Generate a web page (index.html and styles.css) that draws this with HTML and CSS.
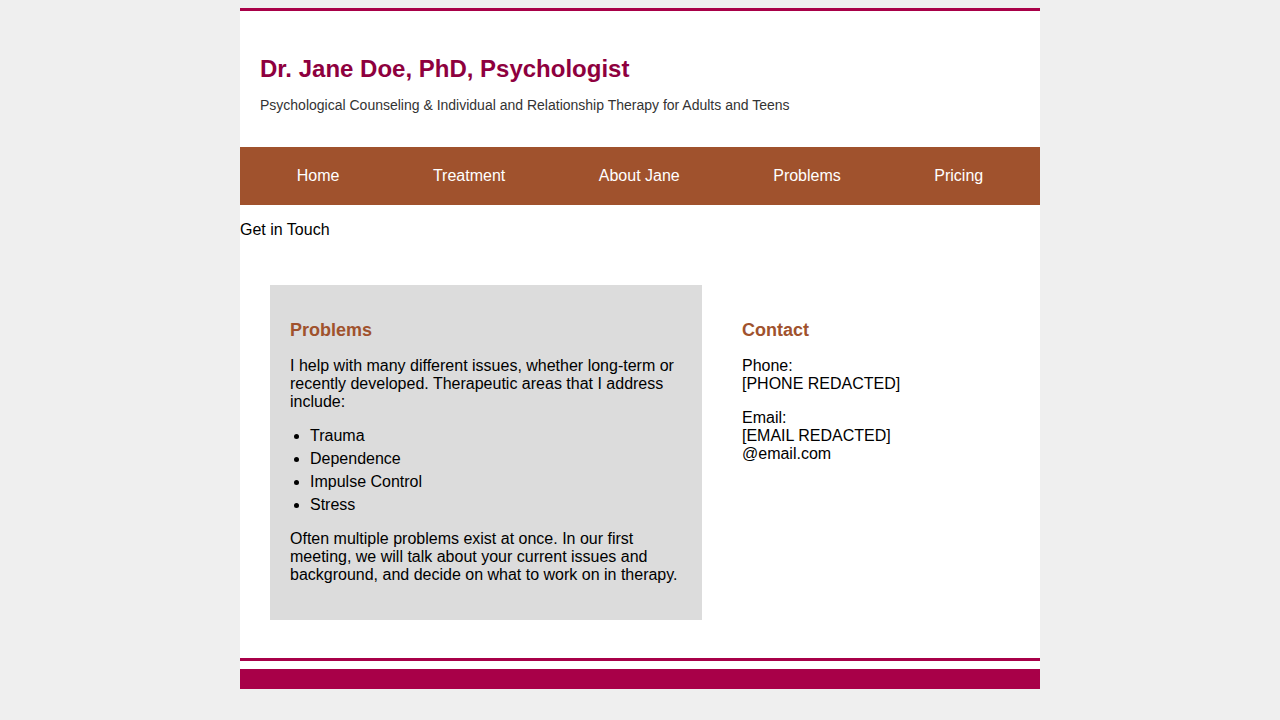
FILE: index.html
```html
<!DOCTYPE html>
<html lang="en">
<head>
<meta charset="utf-8">
<title>Dr. Jane Doe, PhD, Psychologist</title>
<link rel="stylesheet" href="styles.css">
</head>
<body>
<div class="page">
  <header class="header">
    <h1 class="site-title">Dr. Jane Doe, PhD, Psychologist</h1>
    <p class="tagline">Psychological Counseling &amp; Individual and Relationship Therapy for Adults and Teens</p>
  </header>
  <nav class="nav">
    <a class="nav-link" href="#">Home</a>
    <a class="nav-link" href="#">Treatment</a>
    <a class="nav-link" href="#">About Jane</a>
    <a class="nav-link" href="#">Problems</a>
    <a class="nav-link" href="#">Pricing</a>
  </nav>
  <div class="extra-link">Get in Touch</div>
  <main class="main">
    <section class="card card-problems">
      <h3 class="card-title">Problems</h3>
      <p class="text">I help with many different issues, whether long-term or recently developed. Therapeutic areas that I address include:</p>
      <ul class="list">
        <li>Trauma</li>
        <li>Dependence</li>
        <li>Impulse Control</li>
        <li>Stress</li>
      </ul>
      <p class="text">Often multiple problems exist at once. In our first meeting, we will talk about your current issues and background, and decide on what to work on in therapy.</p>
    </section>
    <section class="card card-contact">
      <h3 class="card-title">Contact</h3>
      <p class="text contact-p">Phone:<br>[PHONE REDACTED]</p>
      <p class="text">Email:<br>[EMAIL REDACTED]<br>@email.com</p>
    </section>
  </main>
  <footer class="footer">
    <div class="footer-bar"></div>
  </footer>
</div>
</body>
</html>
```

FILE: styles.css
```css
html, body {
  margin: 0;
  padding: 0;
}
body {
  background: #efefef;
  padding: 8px 0;
  font-family: "Liberation Sans", Arial, Helvetica, sans-serif;
  color: #000;
}
.page {
  width: 800px;
  margin: 0 auto;
  background: #fff;
  border-top: 3px solid #a80048;
}
.header {
  padding: 44px 20px 34px;
}
.site-title {
  margin: 0 0 14px;
  font-size: 24px;
  line-height: 28px;
  font-weight: bold;
  color: #8e003e;
}
.tagline {
  margin: 0;
  font-size: 14px;
  line-height: 16px;
  color: #333;
}
.nav {
  display: flex;
  height: 58px;
  background: #a0522d;
  padding-left: 10px;
}
.nav-link {
  padding: 0 46.75px;
  line-height: 58px;
  font-size: 16px;
  color: #fff;
  text-decoration: none;
}
.extra-link {
  padding-top: 16px;
  font-size: 16px;
  line-height: 18px;
}
.main {
  display: flex;
  gap: 20px;
  padding: 46px 30px 38px;
  align-items: flex-start;
}
.card {
  box-sizing: border-box;
  padding: 35px 20px 36px;
}
.card-problems {
  width: 432px;
  background: #dcdcdc;
}
.card-contact {
  width: 288px;
}
.card-title {
  margin: 0 0 16px;
  font-size: 18px;
  line-height: 21px;
  font-weight: bold;
  color: #a0522d;
}
.text {
  margin: 0;
  font-size: 16px;
  line-height: 18px;
}
.contact-p {
  margin-bottom: 16px;
}
.list {
  margin: 13px 0 14px;
  padding-left: 20px;
  font-size: 16px;
  line-height: 23px;
}
.footer {
  border-top: 3px solid #a80048;
  padding-top: 8px;
}
.footer-bar {
  height: 20px;
  background: #a80048;
}
```
